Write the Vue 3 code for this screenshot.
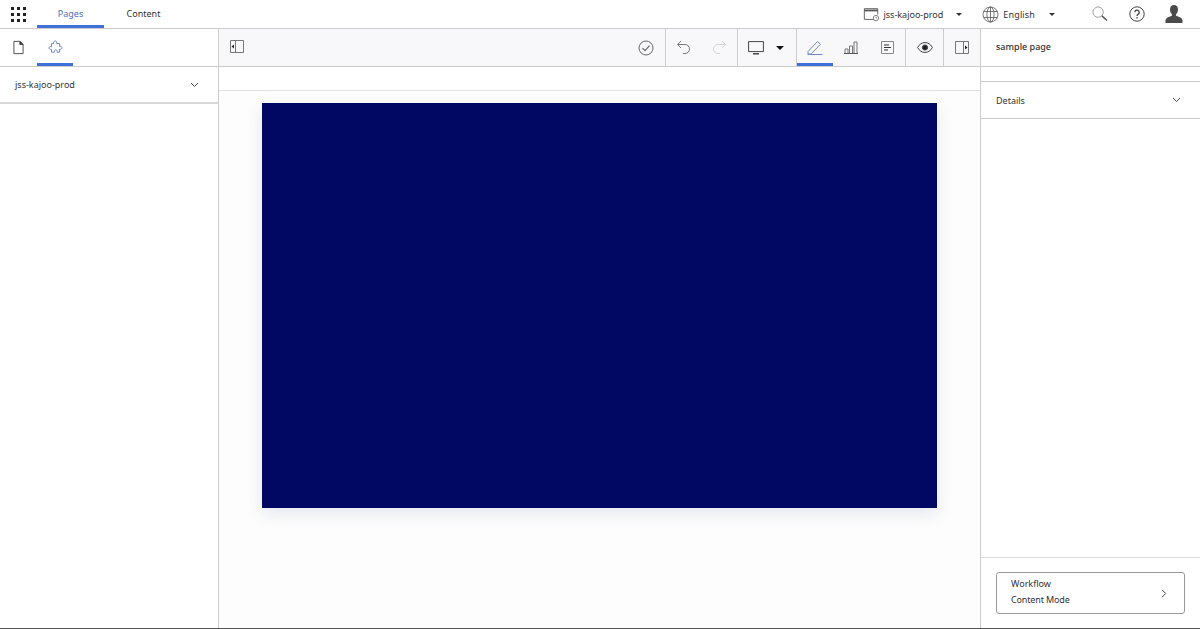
<script setup>
const dots = Array.from({ length: 9 });
</script>

<template>
  <div class="app">
    <header class="topbar">
      <div class="grid-btn">
        <span class="grid-icon"><i v-for="(d, i) in dots" :key="i" /></span>
      </div>
      <nav class="top-tabs">
        <a class="top-tab active">Pages</a>
        <a class="top-tab">Content</a>
      </nav>
      <div class="top-right">
        <div class="picker site">
          <svg width="17" height="15" viewBox="0 0 19 16" fill="none" stroke="#555">
            <path d="M12 13.500H1.500V1.500h15V8" />
            <path d="M1.500 3.500h15" stroke-width="2" />
            <circle cx="14.500" cy="12" r="3" stroke-width=".8" />
            <path d="M14.500 10.500V12h1.300" stroke-width=".7" />
          </svg>
          <span>jss-kajoo-prod</span>
          <b class="caret" />
        </div>
        <div class="picker lang">
          <svg width="17" height="17" viewBox="0 0 17 17" fill="none" stroke="#666" stroke-width=".9">
            <circle cx="8.500" cy="8.500" r="7.500" />
            <ellipse cx="8.500" cy="8.500" rx="3.600" ry="7.500" />
            <path d="M8.500 1v15M1.600 5.500h13.800M1.600 11.500h13.800" />
          </svg>
          <span>English</span>
          <b class="caret" />
        </div>
        <svg class="search" width="16" height="16" viewBox="0 0 17 17" fill="none">
          <circle cx="6.500" cy="6.500" r="5.500" stroke="#999" />
          <path d="M10.500 10.500l5.500 5" stroke="#555" stroke-width="1.500" />
        </svg>
        <svg class="help" width="16" height="16" viewBox="0 0 16 16" fill="none" stroke="#444">
          <circle cx="8" cy="8" r="7.200" />
          <path d="M5.800 6.200a2.200 2.200 0 1 1 3.400 1.900C8.400 8.700 8 9 8 10" stroke-width="1.300" />
          <path d="M8 11v1.500" stroke-width="1.300" />
        </svg>
        <svg class="user" width="18" height="18" viewBox="0 0 18 18" fill="#4a4a4a">
          <path d="M9 0c2.600 0 4 2 4 4.500 0 2-.8 3.700-1.800 4.800-.5.600-.3 1.500.5 1.800 2.700 1 5.300 1.900 5.800 4V18H.5v-2.900c.5-2.100 3.100-3 5.800-4 .8-.3 1-1.200.5-1.800C5.800 8.200 5 6.500 5 4.500 5 2 6.400 0 9 0z" />
        </svg>
      </div>
    </header>

    <div class="body">
      <aside class="left">
        <div class="left-tabs">
          <div class="left-tab">
            <svg width="11" height="15" viewBox="0 0 12 15" fill="none" stroke="#444">
              <path d="M1 .8h6.500L11 4.300V14.200H1z" />
              <path d="M7.500.8V4.300H11z" fill="#333" />
            </svg>
          </div>
          <div class="left-tab active">
            <svg width="15" height="15" viewBox="0 0 15 15" fill="none" stroke="#6a8cc9">
              <path d="M5.500 2.800C5.500 1.500 6.300 1 7.200 1s1.600.6 1.600 1.800l-.2.700h3v3l.8-.2c1 0 1.600.7 1.600 1.500s-.7 1.500-1.600 1.500l-.8-.2v3.100H9l.2-.8c0-.9-.6-1.500-1.400-1.500s-1.500.6-1.500 1.500l.2.800H3.500v-3l-.8.2C1.700 9.400 1 8.700 1 7.900s.7-1.500 1.700-1.500l.8.200v-3h2.200z" />
            </svg>
          </div>
        </div>
        <div class="row site-row">
          <span>jss-kajoo-prod</span>
          <svg class="chev" width="9" height="6" viewBox="0 0 9 6" fill="none" stroke="#444">
            <path d="M1 1l3.500 3.500L8 1" />
          </svg>
        </div>
      </aside>

      <main class="center">
        <div class="toolbar">
          <div class="tool-start">
            <svg width="14" height="13" viewBox="0 0 14 13" fill="none" stroke="#777">
              <path d="M.5.500h13v12H.5zM5.500.500v12" />
              <path d="M4 4.500l-2.500 2L4 8.500z" fill="#222" stroke="none" />
            </svg>
          </div>
          <div class="tool-group check">
            <svg width="16" height="16" viewBox="0 0 16 16" fill="none" stroke="#666">
              <circle cx="8" cy="8" r="7" />
              <path d="M4.500 8.200L7 10.700l4.500-5" stroke-width="1.200" />
            </svg>
          </div>
          <div class="tool-group history">
            <svg width="15" height="15" viewBox="0 0 15 15" fill="none" stroke="#777">
              <path d="M5 1L1.500 4.500 5 8M1.500 4.500H9a4.500 4.500 0 0 1 0 9H7" />
            </svg>
            <svg width="15" height="15" viewBox="0 0 15 15" fill="none" stroke="#d4d4d4">
              <path d="M10 1l3.500 3.500L10 8M13.500 4.500H6a4.500 4.500 0 0 0 0 9h2" />
            </svg>
          </div>
          <div class="tool-group device">
            <svg width="16" height="14" viewBox="0 0 16 14" fill="none" stroke="#444">
              <path d="M.6.600h14.800v10H.6z" />
              <path d="M5 12.800h6" stroke-width="1.500" />
            </svg>
            <b class="caret dark" />
          </div>
          <div class="tool-group modes">
            <div class="mode active">
              <svg width="16" height="15" viewBox="0 0 16 15" fill="none" stroke="#6a8cc9">
                <path d="M1 11.500L10.500 1.500l3 2.800L4 14H1zM.5 14.500h15" />
              </svg>
            </div>
            <div class="mode">
              <svg width="14" height="13" viewBox="0 0 14 13" fill="none" stroke="#777">
                <path d="M1 8h3v4.500H1zM5.500 5h3v7.500h-3zM10 1h3v11.500h-3z" />
                <path d="M0 12.500h14" stroke="#555" />
              </svg>
            </div>
            <div class="mode">
              <svg width="13" height="13" viewBox="0 0 13 13" fill="none">
                <path d="M.5.500h12v12H.5z" stroke="#888" />
                <path d="M3 4h5M3 6.500h7M3 9h4" stroke="#333" />
              </svg>
            </div>
          </div>
          <div class="tool-group eye">
            <svg width="16" height="11" viewBox="0 0 16 11" fill="none" stroke="#444">
              <path d="M.6 5.500C2.500 2 5 .6 8 .6s5.500 1.400 7.400 4.900C13.500 9 11 10.400 8 10.400S2.500 9 .6 5.500z" />
              <circle cx="8" cy="5.500" r="2.600" fill="#222" />
            </svg>
          </div>
          <div class="tool-group end">
            <svg width="14" height="13" viewBox="0 0 14 13" fill="none" stroke="#777">
              <path d="M.5.500h13v12H.5zM8.500.500v12" />
              <path d="M10 4.500l2.500 2L10 8.500z" fill="#222" stroke="none" />
            </svg>
          </div>
        </div>
        <div class="subbar" />
        <div class="stage">
          <div class="canvas" />
        </div>
      </main>

      <aside class="right">
        <div class="page-title">sample page</div>
        <div class="spacer-row" />
        <div class="row details-row">
          <span>Details</span>
          <svg class="chev" width="9" height="6" viewBox="0 0 9 6" fill="none" stroke="#444">
            <path d="M1 1l3.500 3.500L8 1" />
          </svg>
        </div>
        <div class="workflow-wrap">
          <div class="workflow">
            <div class="wf-text">
              <div class="wf-title">Workflow</div>
              <div class="wf-mode">Content Mode</div>
            </div>
            <svg width="6" height="9" viewBox="0 0 6 9" fill="none" stroke="#444">
              <path d="M1 .8l3.700 3.700L1 8.200" />
            </svg>
          </div>
        </div>
      </aside>
    </div>
  </div>
</template>

<style scoped>
.app {
  width: 1200px;
  height: 629px;
  display: flex;
  flex-direction: column;
  box-sizing: border-box;
  background: #fff;
  border-bottom: 1px solid #555;
  font-family: "Noto Sans", "Open Sans", sans-serif;
  font-size: 9px;
  color: #333;
  overflow: hidden;
}

.topbar {
  height: 29px;
  flex-shrink: 0;
  box-sizing: border-box;
  border-bottom: 1px solid #ccc;
  display: flex;
  align-items: stretch;
}

.grid-btn {
  width: 37px;
  display: flex;
  align-items: center;
  padding-left: 11px;
  box-sizing: border-box;
}

.grid-icon {
  display: grid;
  grid-template-columns: repeat(3, 3px);
  gap: 3px;
}

.grid-icon i {
  width: 3px;
  height: 3px;
  background: #222;
}

.top-tabs {
  display: flex;
}

.top-tab {
  width: 67px;
  display: flex;
  align-items: center;
  justify-content: center;
  box-sizing: border-box;
  border-bottom: 3px solid transparent;
  padding-top: 2px;
}

.top-tab.active {
  color: #4a70bd;
  border-bottom-color: #3f6fd8;
}

.top-tab + .top-tab {
  width: 79px;
}

.top-right {
  margin-left: auto;
  display: flex;
  align-items: center;
}

.picker {
  display: flex;
  align-items: center;
  gap: 3px;
}

.picker.site {
  margin-right: 20px;
}

.picker.lang {
  margin-right: 37px;
  gap: 4px;
}

.picker.lang span {
  letter-spacing: 0.15px;
}

.caret {
  width: 0;
  height: 0;
  border-left: 3.5px solid transparent;
  border-right: 3.5px solid transparent;
  border-top: 3.5px solid #333;
  margin-left: 10px;
}

.caret.dark {
  border-left-width: 4px;
  border-right-width: 4px;
  border-top: 4px solid #111;
  margin-left: 0;
}

.search {
  margin-right: 21px;
}

.help {
  margin-right: 20px;
}

.user {
  margin-right: 17px;
}

.body {
  flex: 1;
  display: flex;
  min-height: 0;
}

.left {
  width: 219px;
  flex-shrink: 0;
  box-sizing: border-box;
  border-right: 1px solid #ccc;
}

.left-tabs {
  height: 38px;
  box-sizing: border-box;
  border-bottom: 1px solid #ccc;
  display: flex;
}

.left-tab {
  width: 37px;
  display: flex;
  align-items: center;
  justify-content: center;
  box-sizing: border-box;
  border-bottom: 3px solid transparent;
  padding-top: 3px;
}

.left-tab.active {
  width: 36px;
  border-bottom-color: #3f6fd8;
}

.row {
  display: flex;
  align-items: center;
  justify-content: space-between;
  box-sizing: border-box;
}

.site-row {
  height: 37px;
  padding: 0 19px 0 15px;
  border-bottom: 2px solid #d8d8d8;
}

.center {
  flex: 1;
  min-width: 0;
  display: flex;
  flex-direction: column;
}

.toolbar {
  height: 38px;
  flex-shrink: 0;
  box-sizing: border-box;
  border-bottom: 1px solid #ccc;
  background: #f8f8fb;
  display: flex;
}

.tool-start {
  display: flex;
  align-items: center;
  padding: 0 0 2px 11px;
  margin-right: auto;
}

.tool-group {
  display: flex;
  align-items: center;
  justify-content: center;
  box-sizing: border-box;
  border-right: 1px solid #ccc;
}

.tool-group.check {
  width: 40px;
}

.tool-group.history {
  width: 72px;
  gap: 21px;
}

.tool-group.device {
  width: 59px;
  gap: 12px;
  padding-right: 3px;
}

.tool-group.modes {
  width: 109px;
  justify-content: flex-start;
}

.mode {
  width: 36px;
  height: 100%;
  display: flex;
  align-items: center;
  justify-content: center;
  box-sizing: border-box;
  border-bottom: 3px solid transparent;
  padding-top: 3px;
}

.mode.active {
  border-bottom-color: #3f6fd8;
}

.tool-group.eye {
  width: 38px;
}

.tool-group.end {
  width: 36px;
  border-right: 0;
}

.subbar {
  height: 24px;
  flex-shrink: 0;
  box-sizing: border-box;
  border-bottom: 1px solid #e2e2e2;
}

.stage {
  flex: 1;
  display: flex;
  justify-content: center;
  align-items: flex-start;
  padding-top: 12px;
  background: #fdfdfd;
}

.canvas {
  width: 675px;
  height: 405px;
  background: #000864;
  box-shadow: 0 6px 16px rgba(60, 70, 130, 0.12);
}

.right {
  width: 220px;
  flex-shrink: 0;
  box-sizing: border-box;
  border-left: 1px solid #ccc;
  display: flex;
  flex-direction: column;
}

.page-title {
  height: 38px;
  box-sizing: border-box;
  border-bottom: 1px solid #ccc;
  display: flex;
  align-items: center;
  padding: 0 15px 2px;
  font-weight: 500;
}

.spacer-row {
  height: 15px;
  box-sizing: border-box;
  border-bottom: 1px solid #ccc;
}

.details-row {
  height: 37px;
  padding: 0 19px 0 15px;
  border-bottom: 1px solid #ccc;
}

.workflow-wrap {
  margin-top: auto;
  height: 71px;
  box-sizing: border-box;
  border-top: 1px solid #ddd;
  padding: 14px 15px 0;
}

.workflow {
  width: 189px;
  height: 42px;
  box-sizing: border-box;
  border: 1px solid #999;
  border-radius: 3px;
  display: flex;
  align-items: center;
  justify-content: space-between;
  padding: 0 17px 0 14px;
}

.wf-text {
  margin-top: -2px;
}

.wf-title {
  line-height: 15px;
}

.wf-mode {
  line-height: 17px;
  letter-spacing: -0.15px;
}
</style>
